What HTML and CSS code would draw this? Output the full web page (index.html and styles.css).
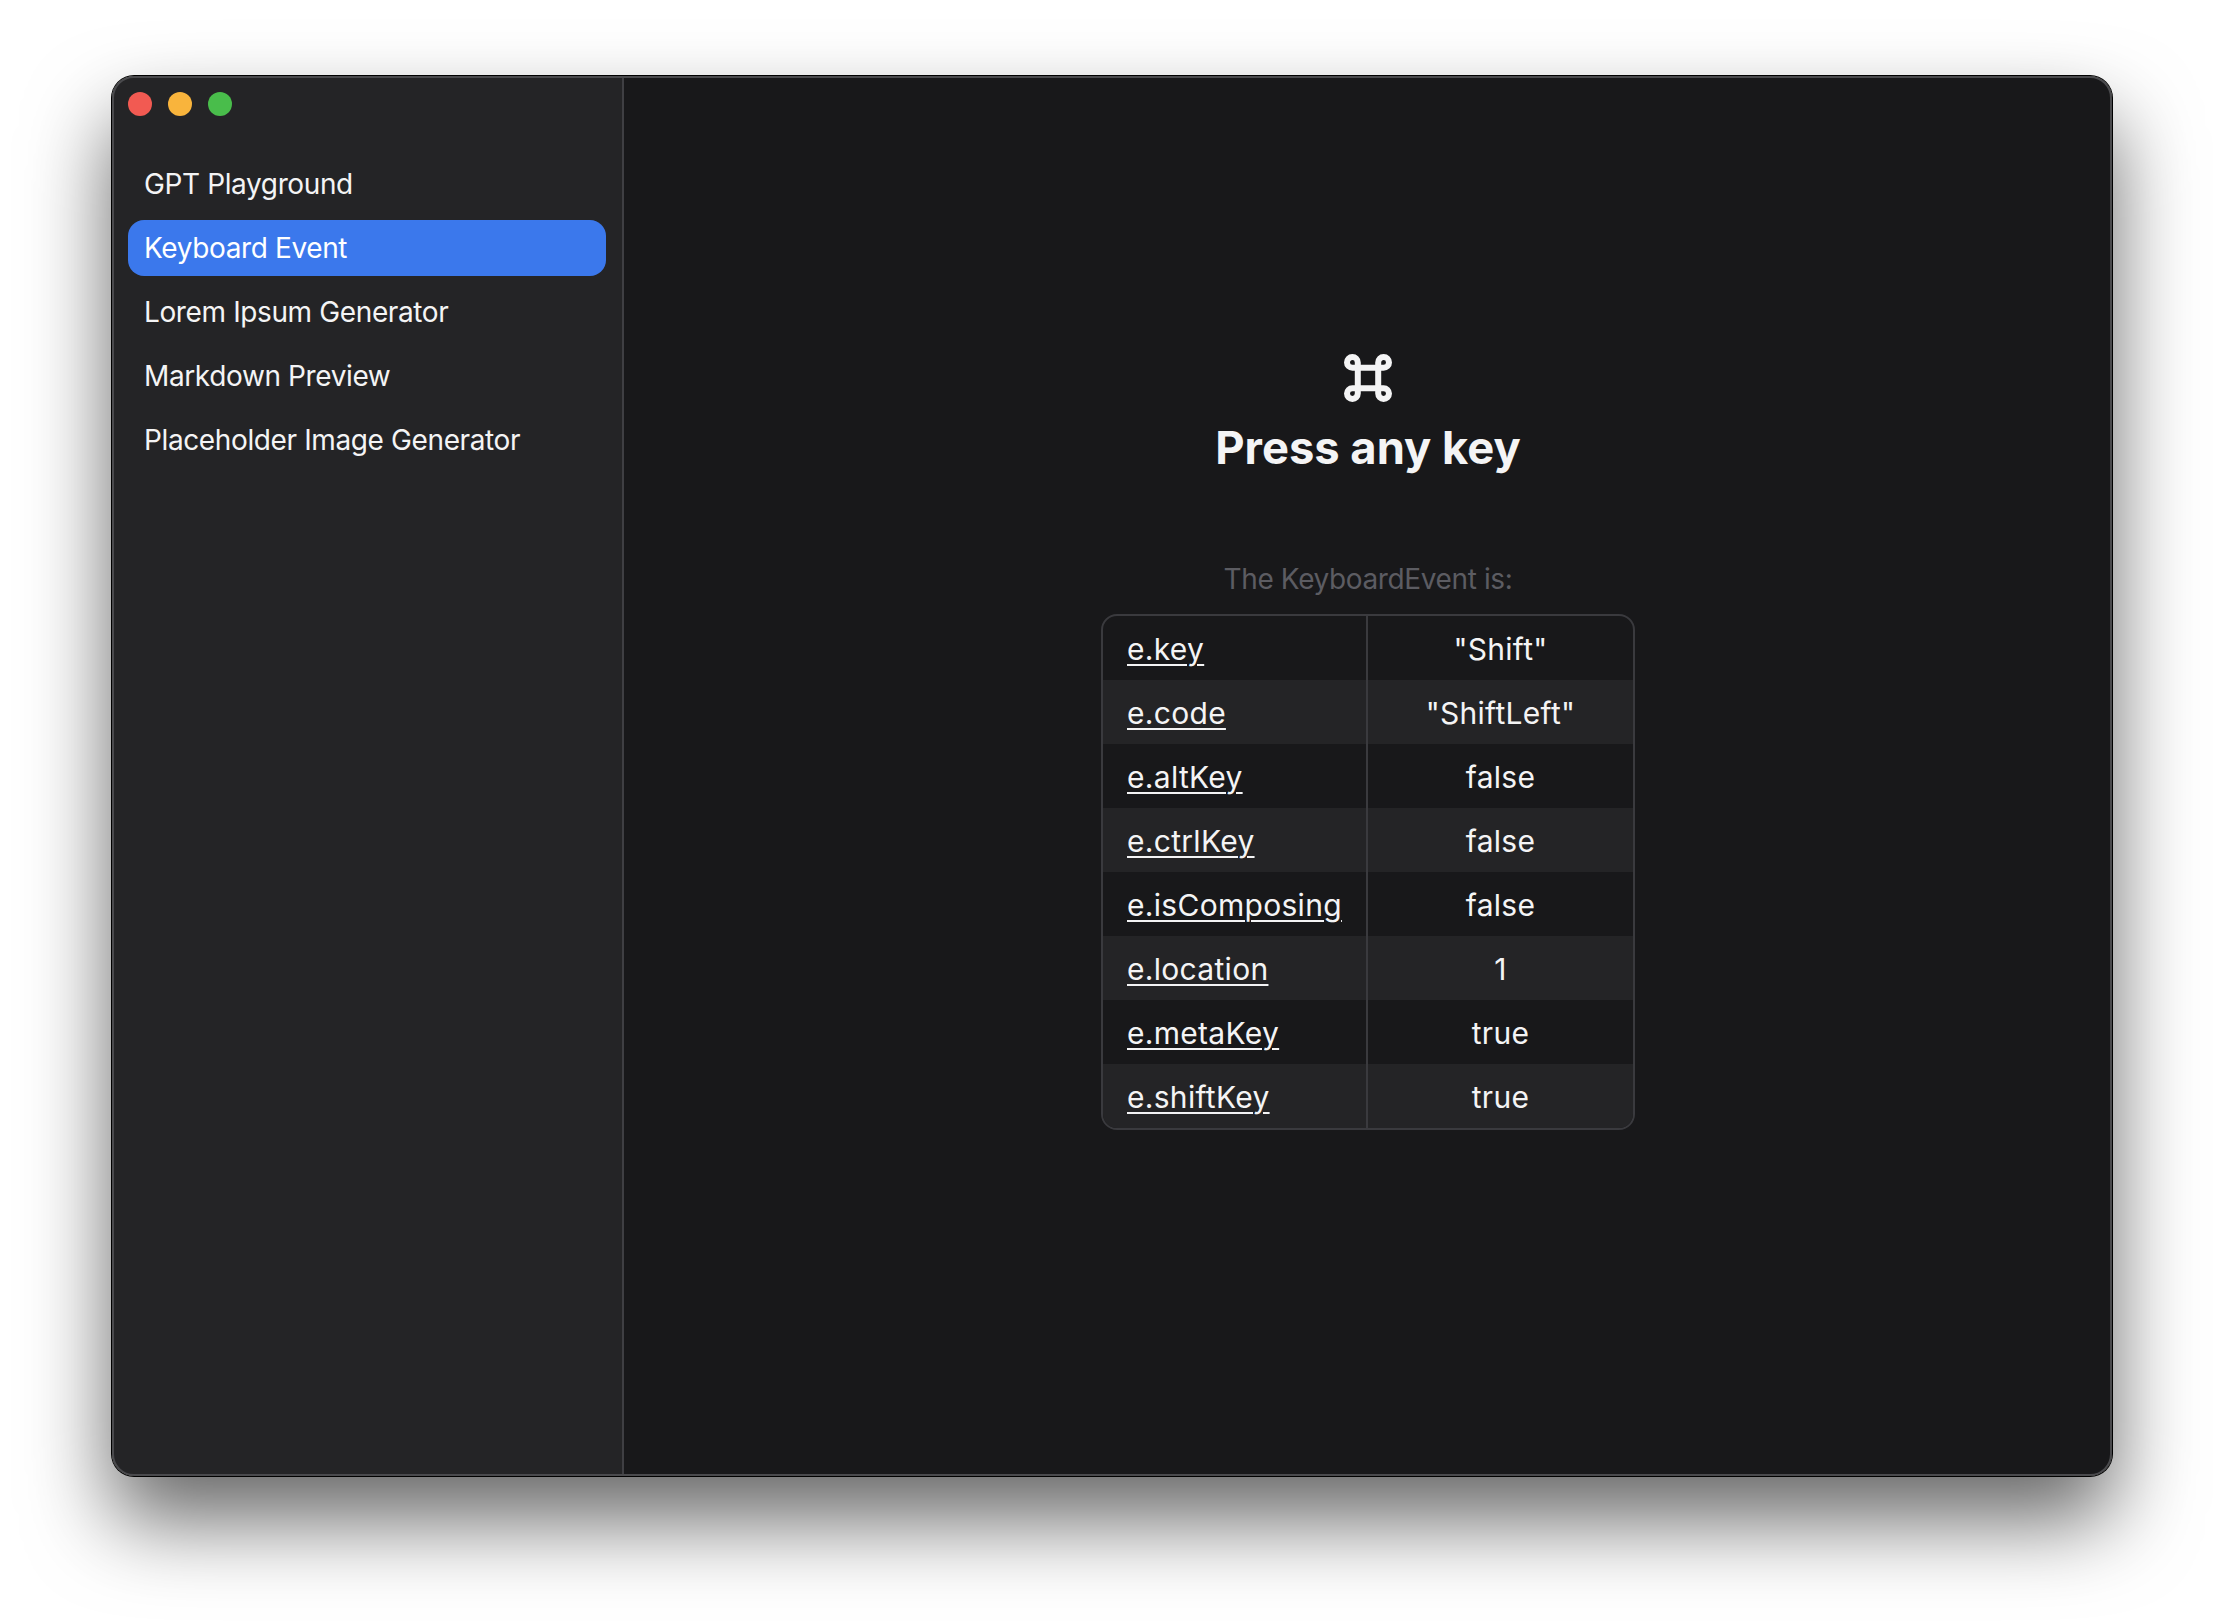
FILE: index.html
```html
<!DOCTYPE html>
<html lang="en">
<head>
  <meta charset="UTF-8">
  <title>Keyboard Event</title>
  <link rel="stylesheet" href="styles.css">
</head>
<body>
  <div class="window">
    <!-- Sidebar -->
    <nav class="sidebar">
      <div class="traffic-lights">
        <span class="light red"></span>
        <span class="light yellow"></span>
        <span class="light green"></span>
      </div>
      <ul class="nav-list">
        <li class="nav-item">GPT Playground</li>
        <li class="nav-item active">Keyboard Event</li>
        <li class="nav-item">Lorem Ipsum Generator</li>
        <li class="nav-item">Markdown Preview</li>
        <li class="nav-item">Placeholder Image Generator</li>
      </ul>
    </nav>

    <!-- Main panel -->
    <main class="content">
      <svg class="cmd-icon" width="48" height="48" viewBox="0 0 48 48" fill="none" stroke="currentColor" stroke-width="6" stroke-linecap="round" stroke-linejoin="round">
        <path d="M39.6 3a5.4 5.4 0 0 0-5.4 5.4v31.2a5.4 5.4 0 0 0 5.4 5.4 5.4 5.4 0 0 0 5.4-5.4 5.4 5.4 0 0 0-5.4-5.4H8.4a5.4 5.4 0 0 0-5.4 5.4 5.4 5.4 0 0 0 5.4 5.4 5.4 5.4 0 0 0 5.4-5.4V8.4a5.4 5.4 0 0 0-5.4-5.4 5.4 5.4 0 0 0-5.4 5.4 5.4 5.4 0 0 0 5.4 5.4h31.2a5.4 5.4 0 0 0 5.4-5.4 5.4 5.4 0 0 0-5.4-5.4z"/>
      </svg>
      <h1 class="title">Press any key</h1>
      <p class="subtitle">The KeyboardEvent is:</p>
      <table class="event-table">
        <tr><td><a href="#">e.key</a></td><td>"Shift"</td></tr>
        <tr><td><a href="#">e.code</a></td><td>"ShiftLeft"</td></tr>
        <tr><td><a href="#">e.altKey</a></td><td>false</td></tr>
        <tr><td><a href="#">e.ctrlKey</a></td><td>false</td></tr>
        <tr><td><a href="#">e.isComposing</a></td><td>false</td></tr>
        <tr><td><a href="#">e.location</a></td><td>1</td></tr>
        <tr><td><a href="#">e.metaKey</a></td><td>true</td></tr>
        <tr><td><a href="#">e.shiftKey</a></td><td>true</td></tr>
      </table>
    </main>
  </div>
</body>
</html>
```

FILE: styles.css
```css
/* Page and window frame */
html, body {
  margin: 0;
  height: 100%;
  overflow: hidden;
}
body {
  background: #fff;
  padding: 76px 112px 0;
  font-family: Inter, "Liberation Sans", sans-serif;
  font-size: 28px;
  letter-spacing: -0.38px;
  color: #f4f4f5;
}
.window {
  display: flex;
  width: 2000px;
  height: 1400px;
  border-radius: 22px;
  overflow: hidden;
  box-shadow: 0 0 0 1px #000, 0 44px 84px rgba(0, 0, 0, 0.6);
  position: relative;
}
.window::after {
  content: "";
  position: absolute;
  inset: 0;
  border: 2px solid #4a4a4d;
  border-radius: 22px;
  pointer-events: none;
}

/* Sidebar */
.sidebar {
  padding: 0 16px;
  width: 478px;
  background: #242426;
  border-right: 2px solid #3f3f43;
}
.traffic-lights {
  display: flex;
  gap: 16px;
  padding-top: 16px;
  height: 64px;
  box-sizing: border-box;
}
.light {
  width: 24px;
  height: 24px;
  border-radius: 50%;
}
.red { background: #f25a52; }
.yellow { background: #f9b43c; }
.green { background: #49bd4b; }
.nav-list {
  list-style: none;
  margin: 16px 0 0;
  padding: 0;
  display: flex;
  flex-direction: column;
  gap: 8px;
}
.nav-item {
  height: 56px;
  line-height: 57px;
  padding: 0 16px;
  border-radius: 16px;
}
.nav-item.active {
  background: #3b78ec;
  color: #fff;
}

/* Main panel */
.content {
  flex: 1;
  display: flex;
  flex-direction: column;
  align-items: center;
  padding-top: 278px;
  background: #18181a;
}
.cmd-icon {
  display: block;
}
.title {
  margin: 14px 0 0;
  font-size: 45.3px;
  line-height: 64px;
  font-weight: 700;
  letter-spacing: 0;
}
.subtitle {
  margin: 79px 0 0;
  line-height: 40px;
  color: #5c5c62;
}
.event-table {
  margin-top: 15px;
  width: 534px;
  border: 2px solid #3a3a3e;
  border-radius: 16px;
  border-spacing: 0;
  overflow: hidden;
  font-size: 30px;
  letter-spacing: 0.3px;
}
.event-table td {
  box-sizing: border-box;
  height: 64px;
  padding: 1px 24px 0;
  text-align: center;
}
.event-table td:first-child {
  width: 265px;
  text-align: left;
  border-right: 2px solid #3a3a3e;
}
.event-table tr:nth-child(even) {
  background: #242426;
}
.event-table a {
  color: inherit;
  text-decoration: underline;
  text-decoration-thickness: 2px;
  text-underline-offset: 4px;
}
```
